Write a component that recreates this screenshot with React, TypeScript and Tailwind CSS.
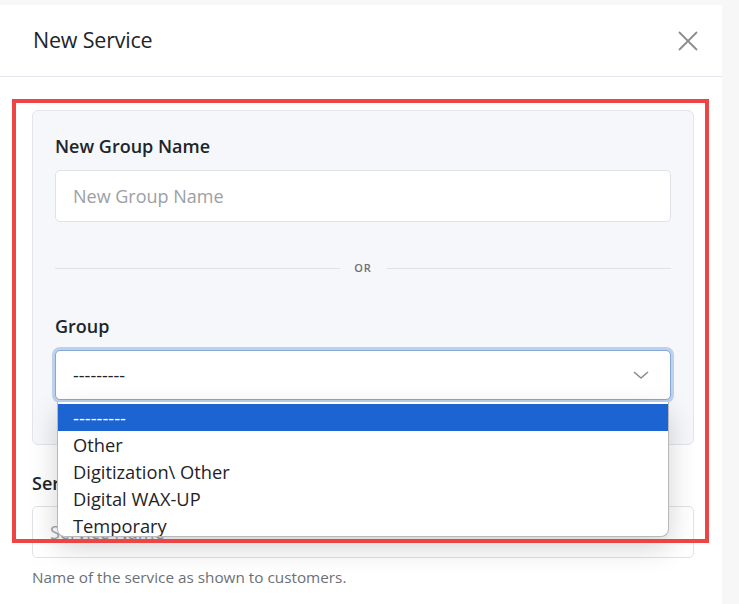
import React from 'react';

const options = ['---------', 'Other', 'Digitization\\ Other', 'Digital WAX-UP', 'Temporary'];

const font = "font-['Open_Sans','Noto_Sans',sans-serif]";

const App: React.FC = () => {
  return (
    <div className={`relative w-full h-[604px] overflow-hidden bg-[#f7f7f8] pt-[5px] text-[#212529] ${font}`}>
      {/* Modal */}
      <div className="w-[722px] h-full bg-white">
        {/* Header */}
        <div className="h-[72px] flex items-center justify-between pl-[33px] pr-[22px] border-b border-[#e3e6ea]">
          <h2 className="text-[21.5px] font-medium tracking-[-0.2px]">New Service</h2>
          <svg width="24" height="24" viewBox="0 0 24 24" className="text-[#8a8d91]">
            <path d="M3 3 L21 21 M21 3 L3 21" stroke="currentColor" strokeWidth="1.8" fill="none" />
          </svg>
        </div>

        {/* Body */}
        <div className="pl-[32px] pr-[28px] pt-[33px]">
          <div className="bg-[#f5f7fa] border border-[#e2e5e9] rounded-[6px] px-[22px] pt-[23px] pb-[44px]">
            <label className="block text-[18px] font-semibold leading-[24px] mb-[12px]">New Group Name</label>
            <div className="h-[52px] bg-white border border-[#dfe2e6] rounded-[5px] flex items-center px-[17px] text-[18px] text-[#9ca0a5]">
              New Group Name
            </div>

            <div className="flex items-center gap-[14px] mt-[38px] h-[16px]">
              <div className="flex-1 h-px bg-[#dfe2e6]" />
              <span className="text-[11px] font-semibold tracking-[1px] text-[#6c7075]">OR</span>
              <div className="flex-1 h-px bg-[#dfe2e6]" />
            </div>

            <label className="block text-[18px] font-semibold leading-[24px] mt-[38px] mb-[12px]">Group</label>
            <div className="h-[50px] bg-white border border-[#86a8d4] rounded-[5px] ring-[3px] ring-[#bcd2ec] flex items-center justify-between pl-[17px] pr-[20px] text-[18px] text-[#212529]">
              <span>---------</span>
              <svg width="18" height="18" viewBox="0 0 18 18" className="text-[#8a8d91]">
                <path d="M2 6 L9 12 L16 6" stroke="currentColor" strokeWidth="1.6" fill="none" />
              </svg>
            </div>
          </div>

          <label className="block text-[18px] font-semibold leading-[24px] mt-[26px] mb-[11px]">Service Name</label>
          <div className="h-[52px] bg-white border border-[#dfe2e6] rounded-[5px] flex items-center px-[17px] text-[18px] text-[#9ca0a5]">
            Service Name
          </div>
          <p className="mt-[8px] text-[15.3px] text-[#6c7075]">Name of the service as shown to customers.</p>
        </div>
      </div>

      {/* Native select dropdown list */}
      <div className="absolute left-[57px] top-[402px] w-[612px] h-[135px] bg-white border border-t-0 border-[#b8b8b8] rounded-b-[8px] pt-[2px] shadow-[0_10px_28px_rgba(0,0,0,0.18)] overflow-hidden">
        {options.map((o, i) => (
          <div
            key={o}
            className={`h-[27px] leading-[27px] pl-[15px] text-[18.3px] ${
              i === 0 ? 'bg-[#1b64d2] text-white' : 'text-[#1f2328]'
            }`}
          >
            {o}
          </div>
        ))}
      </div>

      {/* Annotation box */}
      <div className="absolute left-[12px] top-[99px] w-[697px] h-[444px] border-[4px] border-[#ef4444] pointer-events-none" />
    </div>
  );
};

export default App;
